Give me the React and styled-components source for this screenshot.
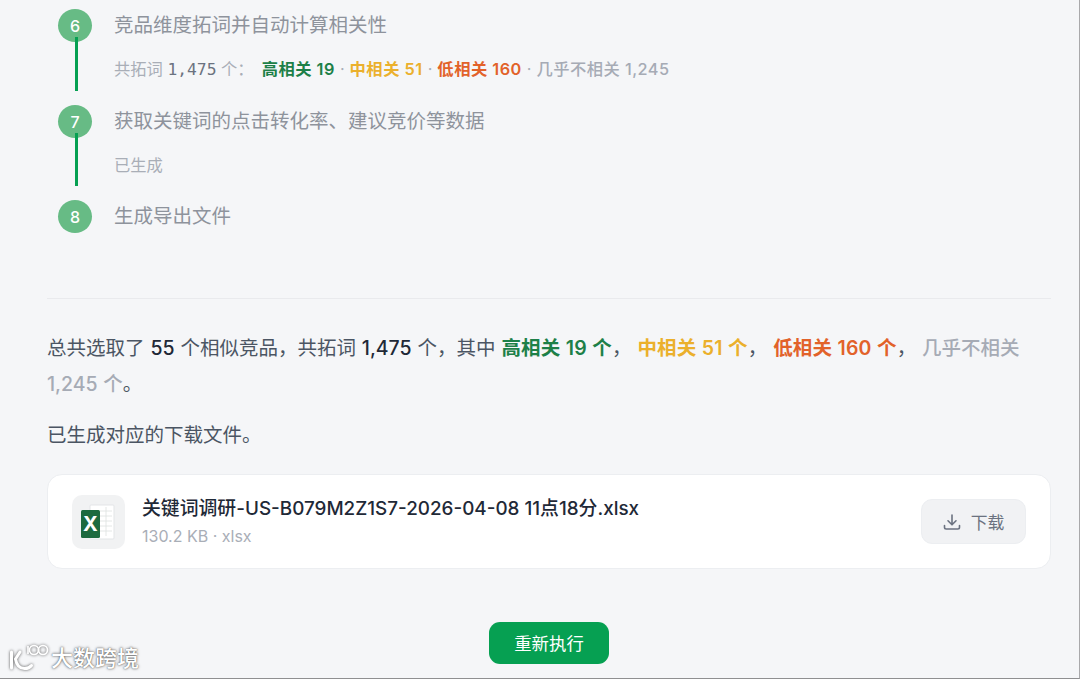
import React from "react";
import styled, { createGlobalStyle } from "styled-components";

const COMMA = "\uFF0C";
const COLON = "\uFF1A";

const HIGH = "#1d8048";
const MID = "#ebb02c";
const LOW = "#e2622a";
const NONE = "#a6abb5";

const GlobalStyle = createGlobalStyle`
  html, body {
    margin: 0;
    padding: 0;
    height: 100%;
    overflow: hidden;
    background: #f5f6f8;
  }
  * { box-sizing: border-box; }
`;

const Page = styled.div`
  position: relative;
  width: 1080px;
  height: 679px;
  padding: 0 28px 0 47px;
  overflow: hidden;
  background: #f5f6f8;
  border-right: 1px solid #a9a9ab;
  border-bottom: 1px solid #8f8f91;
  font-family: Inter, "Noto Sans CJK SC", sans-serif;
  color: #4b5563;
`;

const Steps = styled.div`
  display: flex;
  flex-direction: column;
  padding: 9px 0 0 11px;
`;

const Step = styled.div`
  display: flex;
  gap: 22px;
  height: ${(p) => p.$height}px;
`;

const Rail = styled.div`
  display: flex;
  flex-direction: column;
  align-items: center;
  width: 34px;
  flex: none;
`;

const Circle = styled.div`
  position: relative;
  z-index: 1;
  display: flex;
  align-items: center;
  justify-content: center;
  width: 34px;
  height: 33px;
  border-radius: 50%;
  background: #67bb85;
  color: #fff;
  font-size: 16px;
  font-weight: 500;
`;

const Line = styled.div`
  width: 3px;
  height: ${(p) => p.$height}px;
  margin: -5px 0 0 2px;
  position: relative;
  z-index: 2;
  background: #06a052;
`;

const StepBody = styled.div`
  display: flex;
  flex-direction: column;
`;

const StepTitle = styled.div`
  height: 33px;
  line-height: 33px;
  font-size: 19.5px;
  color: #8e939c;
  white-space: nowrap;
`;

const StepNote = styled.div`
  margin-top: 10px;
  line-height: 34px;
  font-size: 16.3px;
  color: #a9aeb7;
  white-space: nowrap;
`;

const Mono = styled.span`
  font-family: "DejaVu Sans Mono", monospace;
  font-size: 16.3px;
  color: #6b7280;
`;

const NoteLevels = styled.span`
  margin-left: 8px;
`;

const Level = styled.span`
  color: ${(p) => p.$color};
  font-weight: ${(p) => p.$weight || 600};
  letter-spacing: ${(p) => p.$spacing || 0}px;
`;

const Dot = styled.span`
  margin: 0 5px;
  color: #a9aeb7;
`;

const Divider = styled.hr`
  margin: 33px 0 0;
  border: 0;
  border-top: 1px solid #e9eaed;
`;

const Summary = styled.p`
  margin: 31px 0 0;
  font-size: 19.5px;
  line-height: 36px;
  word-spacing: 0.4px;
  color: #4b5563;
`;

const Strong = styled.span`
  color: #1f2937;
  font-weight: 500;
`;

const Done = styled.p`
  margin: 15px 0 0;
  font-size: 19.5px;
  line-height: 36px;
  color: #4b5563;
`;

const FileCard = styled.div`
  display: flex;
  align-items: center;
  gap: 17px;
  height: 95px;
  margin-top: 21px;
  padding: 0 24px;
  background: #fff;
  border: 1px solid #eceef1;
  border-radius: 15px;
`;

const FileIcon = styled.div`
  display: flex;
  align-items: center;
  justify-content: center;
  width: 53px;
  height: 54px;
  padding-right: 2px;
  flex: none;
  border-radius: 10px;
  background: #f1f2f3;
`;

const FileInfo = styled.div`
  display: flex;
  flex: 1;
  flex-direction: column;
  min-width: 0;
`;

const FileName = styled.div`
  line-height: 28px;
  font-size: 18.85px;
  font-weight: 500;
  color: #1f2937;
  white-space: nowrap;
`;

const FileMeta = styled.div`
  margin-top: 1px;
  line-height: 24px;
  font-size: 16px;
  color: #a9aeb7;
`;

const DownloadButton = styled.button`
  display: flex;
  align-items: center;
  justify-content: center;
  gap: 10px;
  width: 105px;
  height: 45px;
  padding: 0;
  border: 1px solid #eceef1;
  border-radius: 11px;
  background: #f1f2f4;
  color: #6b7280;
  font-family: inherit;
  font-size: 16.8px;
`;

const Actions = styled.div`
  display: flex;
  justify-content: center;
  margin-top: 53px;
`;

const RunButton = styled.button`
  width: 120px;
  height: 42px;
  padding: 0 0 2px;
  border: 0;
  border-radius: 11px;
  background: #06a052;
  color: #fff;
  font-family: inherit;
  font-size: 17.4px;
`;

const Watermark = styled.div`
  position: absolute;
  left: 8px;
  bottom: 6px;
  display: flex;
  align-items: center;
  gap: 2px;
  color: #fff;
  font-size: 22px;
  font-weight: 500;
  line-height: 28px;
  text-shadow: 0 0 3px rgba(0, 0, 0, 0.6), 0 0 1px rgba(0, 0, 0, 0.5);
`;

const ExcelIcon = () => (
  <svg width="36" height="36" viewBox="0 0 36 36">
    <rect x="10" y="1" width="24" height="34" rx="1" fill="#fff" stroke="#e3e5e7" />
    <g stroke="#dde1df" strokeWidth="0.8">
      <path d="M20 7h12M20 12h12M20 17h12M20 22h12M20 27h12" />
      <path d="M26 3v29" />
    </g>
    <rect x="1" y="6" width="19" height="28" rx="1.5" fill="#1d6a3f" />
    <text x="10.5" y="27" fontSize="20" fontWeight="700" fill="#fff" textAnchor="middle" fontFamily="Inter, sans-serif">X</text>
  </svg>
);

const DownloadIcon = () => (
  <svg width="18" height="18" viewBox="0 0 18 18" fill="none" stroke="#6b7280" strokeWidth="1.6" strokeLinecap="round" strokeLinejoin="round">
    <path d="M9 2v9.5M5 7.8l4 4 4-4" />
    <path d="M1.5 12.5v1.8c0 1 .7 1.7 1.7 1.7h11.6c1 0 1.7-.7 1.7-1.7v-1.8" />
  </svg>
);

const WatermarkLogo = () => (
  <svg width="41" height="28" viewBox="0 0 41 28" fill="none" style={{ filter: "drop-shadow(0 0 1.5px rgba(0,0,0,.65))" }}>
    <g stroke="#fff" strokeWidth="3" strokeLinecap="round">
      <path d="M3.5 8v16" />
      <path d="M12 8l-4.500 7c1 6 4 9.500 9 9.500 3 0 5.500-1 7-3" />
    </g>
    <g stroke="#fff" strokeWidth="1.7">
      <path d="M20 2v8" />
      <circle cx="26" cy="6" r="4.5" />
      <circle cx="35" cy="6" r="4.5" />
    </g>
  </svg>
);

export default function App() {
  return (
    <Page>
      <GlobalStyle />
      <Steps>
        <Step $height={96}>
          <Rail>
            <Circle>6</Circle>
            <Line $height={54} />
          </Rail>
          <StepBody>
            <StepTitle>竞品维度拓词并自动计算相关性</StepTitle>
            <StepNote>
              共拓词 <Mono>1,475</Mono> 个{COLON}
              <NoteLevels>
                <Level $color={HIGH} $spacing={0.5}>高相关 19</Level>
                <Dot>·</Dot>
                <Level $color={MID} $spacing={0.5}>中相关 51</Level>
                <Dot>·</Dot>
                <Level $color={LOW} $spacing={0.5}>低相关 160</Level>
                <Dot>·</Dot>
                <Level $color={NONE} $weight={500} $spacing={0.45}>几乎不相关 1,245</Level>
              </NoteLevels>
            </StepNote>
          </StepBody>
        </Step>
        <Step $height={95}>
          <Rail>
            <Circle>7</Circle>
            <Line $height={53} />
          </Rail>
          <StepBody>
            <StepTitle>获取关键词的点击转化率、建议竞价等数据</StepTitle>
            <StepNote>已生成</StepNote>
          </StepBody>
        </Step>
        <Step $height={65}>
          <Rail>
            <Circle>8</Circle>
          </Rail>
          <StepBody>
            <StepTitle>生成导出文件</StepTitle>
          </StepBody>
        </Step>
      </Steps>
      <Divider />
      <Summary>
        总共选取了 <Strong>55</Strong> 个相似竞品{COMMA}共拓词 <Strong>1,475</Strong> 个{COMMA}其中{" "}
        <Level $color={HIGH} $spacing={0.15}>高相关 19 个</Level>{COMMA}{" "}
        <Level $color={MID} $spacing={0.15}>中相关 51 个</Level>{COMMA}{" "}
        <Level $color={LOW} $spacing={0.15}>低相关 160 个</Level>{COMMA}{" "}
        <Level $color={NONE} $weight={500}>几乎不相关 1,245 个</Level>。
      </Summary>
      <Done>已生成对应的下载文件。</Done>
      <FileCard>
        <FileIcon>
          <ExcelIcon />
        </FileIcon>
        <FileInfo>
          <FileName>关键词调研-US-B079M2Z1S7-2026-04-08 11点18分.xlsx</FileName>
          <FileMeta>130.2 KB · xlsx</FileMeta>
        </FileInfo>
        <DownloadButton>
          <DownloadIcon />
          下载
        </DownloadButton>
      </FileCard>
      <Actions>
        <RunButton>重新执行</RunButton>
      </Actions>
      <Watermark>
        <WatermarkLogo />
        大数跨境
      </Watermark>
    </Page>
  );
}
